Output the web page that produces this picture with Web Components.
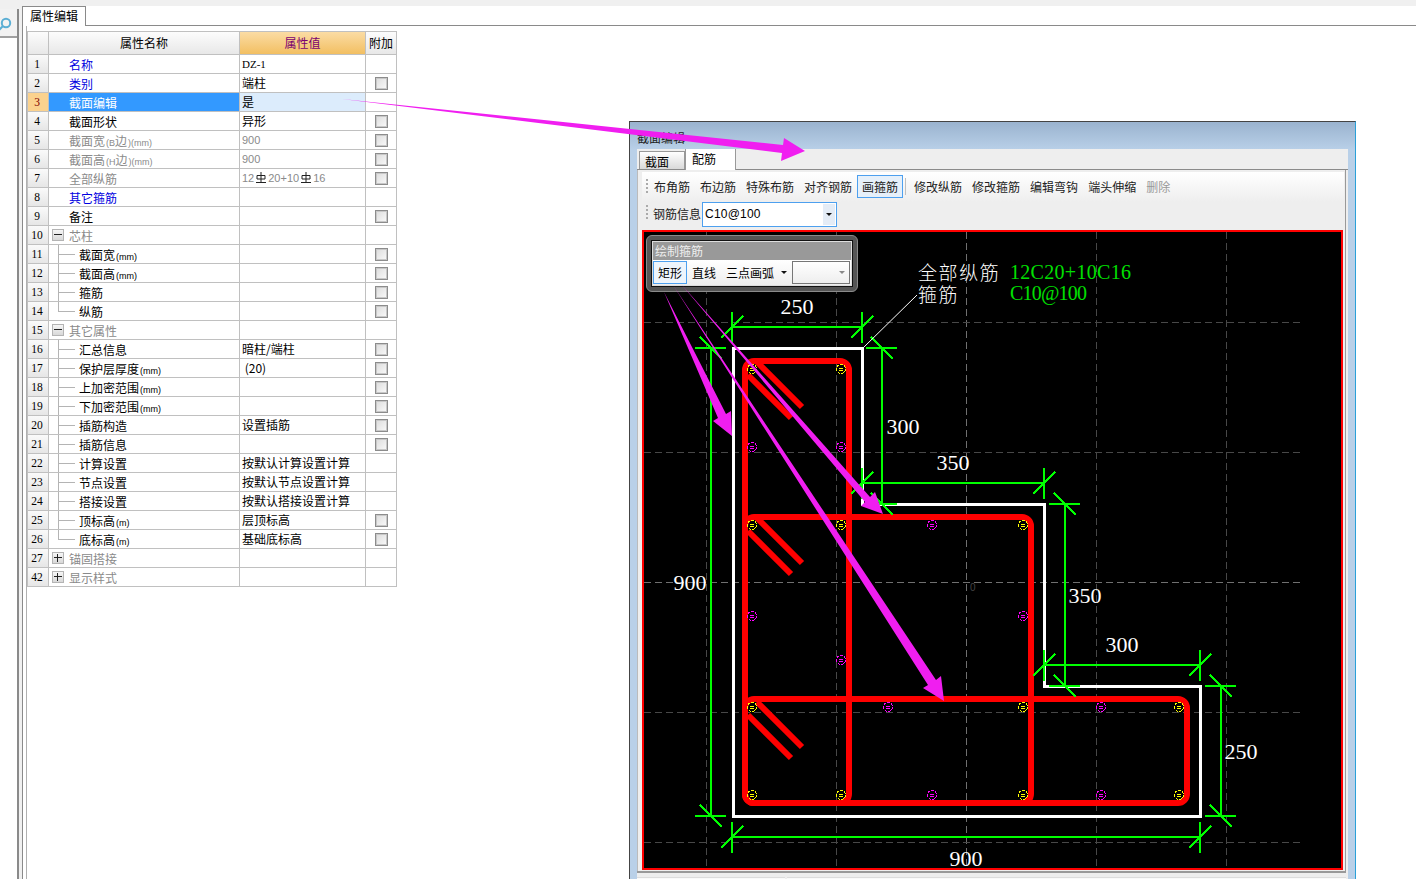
<!DOCTYPE html>
<html>
<head>
<meta charset="utf-8">
<style>
  html, body { margin: 0; height: 100%; overflow: hidden; background: #fff; }
  body { font: 12px "Noto Sans CJK SC", "Liberation Sans", sans-serif; color: #000; }
</style>
</head>
<body>
<app-shell>
  <side-strip slot="side"></side-strip>
  <prop-panel slot="main"></prop-panel>
  <section-dialog slot="over"></section-dialog>
  <arrow-layer slot="over"></arrow-layer>
</app-shell>

<script>
class AppShell extends HTMLElement {
  constructor() {
    super();
    this.attachShadow({ mode: 'open' });
    this.shadowRoot.innerHTML = `
      <style>
        :host { display: flex; flex-direction: column; width: 1416px; height: 879px; position: relative; overflow: hidden; background: #fff; }
        .top { height: 6px; flex: none; background: #f0f0f0; }
        .body { flex: 1; display: flex; min-height: 0; }
      </style>
      <div class="top"></div>
      <div class="body">
        <slot name="side"></slot>
        <slot name="main"></slot>
      </div>
      <slot name="over"></slot>
    `;
  }
}

class SideStrip extends HTMLElement {
  constructor() {
    super();
    this.attachShadow({ mode: 'open' });
    this.shadowRoot.innerHTML = `
      <style>
        :host { display: flex; width: 22px; flex: none; background: #f0f0f0; }
        .pane { width: 17px; margin-top: 3px; background: #fff; border-right: 2px solid #8a8a8a; }
        .find { height: 27px; background: #f2f2f2; border-bottom: 2px solid #a0a0a0; display: flex; align-items: center; overflow: hidden; }
        svg { display: block; margin: 2px 0 0 -2px; }
      </style>
      <div class="pane">
        <div class="find">
          <svg width="14" height="14" viewBox="0 0 14 14">
            <circle cx="8" cy="6" r="4.2" fill="none" stroke="#5aaed4" stroke-width="2"/>
            <path d="M5 9 L1 13" stroke="#5aaed4" stroke-width="2"/>
          </svg>
        </div>
      </div>
    `;
  }
}

const BAR = '<svg class="sym" width="10" height="11" viewBox="0 0 10 11"><path d="M5 0V10M1 3.5H9V7H1ZM0 10.5H10" fill="none" stroke="#222"/></svg>';

const ROWS = [
  ['1', '名称', 'DZ-1', 'blue', 0, false],
  ['2', '类别', '端柱', 'blue', 0, true],
  ['3', '截面编辑', '是', 'sel', 0, false],
  ['4', '截面形状', '异形', '', 0, true],
  ['5', '截面宽(B边)(mm)', '900', 'gray', 0, true],
  ['6', '截面高(H边)(mm)', '900', 'gray', 0, true],
  ['7', '全部纵筋', `12${BAR}20+10${BAR}16`, 'gray', 0, true],
  ['8', '其它箍筋', '', 'blue', 0, false],
  ['9', '备注', '', '', 0, true],
  ['10', '芯柱', '', 'gray', 'minus', false],
  ['11', '截面宽(mm)', '', '', 1, true],
  ['12', '截面高(mm)', '', '', 1, true],
  ['13', '箍筋', '', '', 1, true],
  ['14', '纵筋', '', '', 2, true],
  ['15', '其它属性', '', 'gray', 'minus', false],
  ['16', '汇总信息', '暗柱/端柱', '', 1, true],
  ['17', '保护层厚度(mm)', ' (20)', '', 1, true],
  ['18', '上加密范围(mm)', '', '', 1, true],
  ['19', '下加密范围(mm)', '', '', 1, true],
  ['20', '插筋构造', '设置插筋', '', 1, true],
  ['21', '插筋信息', '', '', 1, true],
  ['22', '计算设置', '按默认计算设置计算', '', 1, false],
  ['23', '节点设置', '按默认节点设置计算', '', 1, false],
  ['24', '搭接设置', '按默认搭接设置计算', '', 1, false],
  ['25', '顶标高(m)', '层顶标高', '', 1, true],
  ['26', '底标高(m)', '基础底标高', '', 2, true],
  ['27', '锚固搭接', '', 'gray', 'plus', false],
  ['42', '显示样式', '', 'gray', 'plus', false],
];

class PropRow extends HTMLElement {
  constructor() {
    super();
    this.attachShadow({ mode: 'open' });
  }

  connectedCallback() {
    const [num, name, value, kind, level, check] = ROWS[+this.getAttribute('index')];
    let tree = '';
    if (level === 'minus' || level === 'plus') {
      tree = `<span class="box">${level === 'plus' ? '<b class="v"></b>' : ''}<b class="h"></b></span>`;
    } else if (level) {
      tree = `<span class="tree ${level === 2 ? 'end' : ''}"></span>`;
    }
    const label = name.replace(/[()A-Za-z]+/g, m => `<small>${m}</small>`);
    this.shadowRoot.innerHTML = `
      <style>
        :host { display: grid; grid-template-columns: 21px 191px 126px 31px; height: 19px; box-sizing: border-box; }
        div { box-sizing: border-box; border-right: 1px solid #c0c0c0; border-bottom: 1px solid #c0c0c0; min-width: 0; white-space: pre; line-height: 18px; font-size: 12px; overflow: hidden; }
        .num { background: linear-gradient(#fafafa, #e6e6e6); text-align: center; padding-right: 2px; font: 11.5px/18px "Liberation Serif", serif; }
        .name { display: flex; align-items: center; color: #000; position: relative; }
        .name span.t { margin-left: 20px; position: relative; top: 1px; }
        .sub span.t { margin-left: 30px; }
        small { font: 9px "Liberation Sans", sans-serif; margin: 0 0 0 1px; }
        .blue .name { color: #0000e0; }
        .gray .name { color: #8a8a8a; }
        .sel .name { background: #3399ff; color: #fff; }
        .sel .val { background: #dcecfc; }
        .sel .num { background: #fbd28e; color: #800000; }
        .val { padding-left: 2px; }
        .val.mono { font: 11px/18px "Liberation Serif", serif; }
        .gray .val { color: #8a8a8a; font: 11px/18px "Liberation Sans", sans-serif; }
        .sym { vertical-align: -1px; margin: 0 2px; }
        .add { display: flex; align-items: center; justify-content: center; }
        .check { width: 11px; height: 11px; border: 1px solid #8c8c8c; background: linear-gradient(135deg, #dcdcdc, #fafafa); outline: 1px solid #c8c8c8; outline-offset: -2px; }
        .box { position: absolute; left: 3px; top: 3px; width: 12px; height: 12px; border: 1px solid #b4b4b4; box-sizing: border-box; background: linear-gradient(#f6f6f6, #d8d8d8); }
        .box b { position: absolute; background: #222; }
        .box .h { left: 1px; right: 1px; top: 4px; height: 1px; }
        .box .v { top: 1px; bottom: 1px; left: 4px; width: 1px; }
        .tree { position: absolute; left: 9px; top: -1px; bottom: -1px; width: 16px; border-left: 1px solid #b4b4b4; }
        .tree::after { content: ""; position: absolute; left: 0; right: 0; top: 10px; border-top: 1px solid #b4b4b4; }
        .tree.end { bottom: 8px; }
        .wrap { display: contents; }
      </style>
      <section class="wrap ${kind} ${level === 1 || level === 2 ? 'sub' : ''}">
        <div class="num">${num}</div>
        <div class="name">${tree}<span class="t">${label}</span></div>
        <div class="val ${value === 'DZ-1' ? 'mono' : ''}">${value}</div>
        <div class="add">${check ? '<span class="check"></span>' : ''}</div>
      </section>
    `;
  }
}

class PropPanel extends HTMLElement {
  constructor() {
    super();
    this.attachShadow({ mode: 'open' });
    const rows = ROWS.map((r, i) => `<prop-row index="${i}"></prop-row>`).join('');
    this.shadowRoot.innerHTML = `
      <style>
        :host { display: flex; flex-direction: column; flex: 1; min-width: 0; }
        .tabs { height: 20px; flex: none; display: flex; box-sizing: border-box; }
        .tab { width: 64px; box-sizing: border-box; border: 1px solid #8a8a8a; border-bottom: none; background: #fff; padding-left: 7px; line-height: 17px; font-size: 12px; }
        .rest { flex: 1; border-bottom: 1px solid #8a8a8a; }
        .page { flex: 1; display: flex; border-left: 1px solid #8a8a8a; padding-left: 3px; }
        .in { flex: 1; border-left: 1px solid #b0b0b0; padding-top: 5px; }
        .head { display: grid; grid-template-columns: 21px 191px 126px 31px; height: 24px; font-size: 12px; border-top: 1px solid #c0c0c0; border-left: 1px solid #c0c0c0; box-sizing: border-box; width: 370px; }
        .head div { box-sizing: border-box; border-right: 1px solid #c0c0c0; border-bottom: 1px solid #c0c0c0; text-align: center; line-height: 22px; background: linear-gradient(#fcfcfc, #e8e8e8); }
        .head .on { background: linear-gradient(#fbdca4, #f2bf62); color: #7a0070; }
        .rows { border-left: 1px solid #c0c0c0; width: 370px; box-sizing: border-box; }
      </style>
      <div class="tabs"><div class="tab">属性编辑</div><div class="rest"></div></div>
      <div class="page"><div class="in">
        <div class="head"><div></div><div>属性名称</div><div class="on">属性值</div><div>附加</div></div>
        <div class="rows">${rows}</div>
      </div></div>
    `;
  }
}

class SectionDialog extends HTMLElement {
  constructor() {
    super();
    this.attachShadow({ mode: 'open' });
    this.shadowRoot.innerHTML = `
      <style>
        :host { position: absolute; left: 629px; top: 121px; width: 727px; height: 758px; box-sizing: border-box; border: 1px solid #444; border-bottom: none; background: linear-gradient(#9ab3cf 0, #b9d0e8 28px, #b9d0e8 100%); display: flex; flex-direction: column; padding: 27px 7px 0 7px; border-right-color: #2aa0d8; }
        .title { position: absolute; left: 7px; top: 7px; font-size: 12px; line-height: 17px; color: #222; }
        .inner { flex: 1; background: #eee; display: flex; flex-direction: column; min-height: 0; overflow: hidden; }
        .tabs { height: 21px; flex: none; display: flex; align-items: flex-end; padding-left: 2px; border-bottom: 1px solid #8a8a8a; position: relative; box-sizing: border-box; }
        .tab { box-sizing: border-box; height: 18px; width: 46px; border: 1px solid #999; border-bottom: none; background: linear-gradient(#fff, #d9d9d9); font-size: 12px; line-height: 19px; padding-left: 5px; }
        .tab.on { height: 22px; width: 51px; background: #fff; position: relative; top: 1px; padding-left: 6px; line-height: 20px; border-color: #999; }
        .pane { flex: none; margin-right: 2px; border-left: 1px solid #bbb; border-right: 1px solid #999; padding: 2px 1px 1px 4px; display: flex; flex-direction: column; }
        .bar { height: 30px; flex: none; display: flex; align-items: flex-start; padding: 3px 0 0 4px; background: linear-gradient(#fff, #eee); box-sizing: border-box; }
        .grip { width: 2px; height: 16px; margin: 4px 1px 0 0; background: repeating-linear-gradient(#aaa 0 2px, transparent 2px 4px); }
        .btn { height: 23px; box-sizing: border-box; font-size: 12px; line-height: 21px; padding: 0 4px; border: 1px solid transparent; white-space: nowrap; color: #222; }
        .btn.on { border-color: #4da0ef; background: #e6f0fa; }
        .btn.off { color: #999; }
        .sep { width: 1px; height: 17px; background: #c0c0c0; margin: 3px 3px 0 2px; }
        .row2 { height: 25px; flex: none; display: flex; align-items: flex-start; padding-left: 4px; background: #eee; }
        .row2 .grip { margin: 3px 5px 0 0; }
        .row2 label { font-size: 12px; line-height: 24px; margin-right: 1px; color: #222; white-space: nowrap; }
        .combo { width: 135px; height: 25px; box-sizing: border-box; border: 1px solid #4da0ef; background: #fff; display: flex; font: 12px/22px "Liberation Sans", sans-serif; padding-left: 2px; }
        .combo span { flex: 1; letter-spacing: .2px; }
        .combo u { width: 12px; margin: 1px; background: #e4ecf6; display: flex; align-items: center; justify-content: center; }
        .combo u::after { content: ""; border: 3px solid transparent; border-top: 3px solid #111; border-bottom: none; }
        .canvas { margin-top: 3px; width: 701px; height: 640px; flex: none; }
        .foot { flex: 1; border-top: 2px solid #999; margin-right: 2px; padding-top: 4px; display: flex; gap: 2px; }
        .foot span { background: #fafafa; border-top: 1px solid #ddd; }
        .foot span:first-child { width: 148px; }
        .foot span:last-child { flex: 1; }
      </style>
      <div class="title">截面编辑</div>
      <div class="inner">
        <div class="tabs"><div class="tab">截面</div><div class="tab on">配筋</div></div>
        <div class="pane">
          <div class="bar">
            <span class="grip"></span>
            <span class="btn">布角筋</span><span class="btn">布边筋</span><span class="btn">特殊布筋</span><span class="btn">对齐钢筋</span><span class="btn on">画箍筋</span>
            <span class="sep"></span>
            <span class="btn">修改纵筋</span><span class="btn">修改箍筋</span><span class="btn">编辑弯钩</span><span class="btn">端头伸缩</span><span class="btn off">删除</span>
          </div>
          <div class="row2">
            <span class="grip"></span>
            <label>钢筋信息</label>
            <div class="combo"><span>C10@100</span><u></u></div>
          </div>
          <rebar-canvas class="canvas"></rebar-canvas>
        </div>
        <div class="foot"><span></span><span></span></div>
      </div>
    `;
  }
}

class DrawTools extends HTMLElement {
  constructor() {
    super();
    this.attachShadow({ mode: 'open' });
    this.shadowRoot.innerHTML = `
      <style>
        :host { position: absolute; left: 2px; top: 3px; width: 212px; height: 57px; box-sizing: border-box; border-radius: 6px; background: #555; border: 1px solid #8a8a8a; padding: 4px; display: flex; }
        .in { flex: 1; border: 1px solid #111; outline: 1px solid #ddd; outline-offset: -2px; display: flex; flex-direction: column; padding: 1px; background: #fff; }
        .t { height: 18px; flex: none; background: #999; color: #eee; font-size: 12px; line-height: 17px; padding-left: 2px; }
        .r { flex: 1; display: flex; align-items: center; background: linear-gradient(#fff, #eee); }
        .b { height: 23px; box-sizing: border-box; font-size: 12px; line-height: 21px; padding: 0 4px; border: 1px solid transparent; white-space: nowrap; }
        .b.on { border-color: #4da0ef; background: #eef5fc; }
        .caret { border: 3px solid transparent; border-top: 3px solid #111; border-bottom: none; margin: 0 5px 0 2px; }
        .c { width: 58px; height: 23px; box-sizing: border-box; border: 1px solid #777; background: linear-gradient(#fff, #eee); display: flex; align-items: center; justify-content: flex-end; padding-right: 4px; }
        .c::after { content: ""; border: 3px solid transparent; border-top: 3px solid #888; border-bottom: none; }
      </style>
      <div class="in">
        <div class="t">绘制箍筋</div>
        <div class="r">
          <span class="b on">矩形</span><span class="b">直线</span><span class="b">三点画弧</span><span class="caret"></span><span class="c"></span>
        </div>
      </div>
    `;
  }
}

// drawing below is in page coordinates, the viewBox shifts it into the canvas
function dim(parts) {
  return parts.map(p => `<path d="${p}"/>`).join('');
}

function tickV(x, y) { // vertical stroke with diagonal, on horizontal dimension
  return `M${x} ${y - 15}V${y + 16}M${x - 11} ${y + 11}L${x + 11} ${y - 11}`;
}
function tickH(x, y) { // horizontal stroke with diagonal, on vertical dimension
  return `M${x - 16} ${y}H${x + 15}M${x - 11} ${y - 11}L${x + 11} ${y + 11}`;
}

function stirrup(x1, y1, x2, y2) {
  return `<rect x="${x1}" y="${y1}" width="${x2 - x1}" height="${y2 - y1}" rx="9"/>`;
}
function hooks(dy) {
  return `<path d="M757 ${362 + dy}L802 ${407 + dy}M748 ${375 + dy}L791 ${418 + dy}"/>`;
}
function bars(list, color) {
  return list.map(([x, y]) => `<g stroke="${color}"><circle cx="${x}" cy="${y}" r="4.5" stroke-dasharray="3 1"/><path d="M${x - 2} ${y - 1}h4M${x - 2} ${y + 1}h4"/></g>`).join('');
}

class RebarCanvas extends HTMLElement {
  constructor() {
    super();
    this.attachShadow({ mode: 'open' });
    const gridX = [706.5, 836.5, 966.5, 1096.5, 1226.5];
    const gridY = [322.5, 452.5, 582.5, 712.5, 842.5];
    const grid = gridX.map(x => `<path d="M${x} 232V868" stroke="${x === 966.5 ? '#707070' : '#484848'}"/>`).join('') +
      gridY.map(y => `<path d="M644 ${y}H1300" stroke="${y === 582.5 ? '#707070' : '#484848'}"/>`).join('');
    const yellow = [[752, 369], [841, 369], [752, 525], [841, 525], [1023, 525], [752, 707], [1023, 707], [1179, 707], [752, 795], [841, 795], [1023, 795], [1179, 795]];
    const magenta = [[752, 447], [841, 447], [932, 525], [752, 616], [1023, 616], [841, 660], [888, 707], [1101, 707], [932, 795], [1101, 795]];
    const dims = [
      'M732 327H862', tickV(732, 327), tickV(862, 327),
      'M711 348V816', tickH(711, 348), tickH(711, 816),
      'M732 837H1200', tickV(732, 837), tickV(1200, 837),
      'M882 348V504', tickH(882, 348), tickH(882, 504),
      'M862 483H1044', tickV(862, 483), tickV(1044, 483),
      'M1065 504V686', tickH(1065, 504), tickH(1065, 686),
      'M1044 665H1200', tickV(1044, 665), tickV(1200, 665),
      'M1221 686V816', tickH(1221, 686), tickH(1221, 816),
    ];
    const labels = [['250', 797, 314], ['300', 903, 434], ['350', 953, 470], ['350', 1085, 603], ['300', 1122, 652], ['250', 1241, 759], ['900', 690, 590], ['900', 966, 866]];
    this.shadowRoot.innerHTML = `
      <style>
        :host { display: block; position: relative; box-sizing: border-box; border: 2px solid #f00; background: #000; overflow: hidden; }
        svg { position: absolute; left: -2px; top: -2px; display: block; }
        text.n { font: 22px "Liberation Serif", serif; fill: #fff; text-anchor: middle; }
        text.c { font: 300 19px "Liberation Sans", "Noto Sans CJK SC", sans-serif; letter-spacing: 1.6px; fill: #fff; }
        text.g { font: 20px "Liberation Serif", serif; fill: #00e000; }
      </style>
      <svg width="701" height="640" viewBox="642 230 701 640" fill="none">
        <g stroke-dasharray="7 4" stroke-width="1">${grid}</g>
        <text x="970" y="591" style="font:10px 'Liberation Sans',sans-serif;fill:#444">0</text>
        <path d="M733 348.5H862V504H1044V686.5H1200.5V816H733Z" stroke="#fff" stroke-width="3" shape-rendering="crispEdges"/>
        <g stroke="#f00" stroke-width="6">
          ${stirrup(745, 361, 849, 803)}
          ${stirrup(745, 517, 1031, 803)}
          ${stirrup(745, 699, 1187, 803)}
          ${hooks(0)}${hooks(156)}${hooks(340)}
        </g>
        <g stroke-width="1" shape-rendering="crispEdges">${bars(yellow, '#ff0')}${bars(magenta, '#f0f')}</g>
        <g stroke="#0f0" stroke-width="2" shape-rendering="crispEdges">${dim(dims)}</g>
        <path d="M864 347L917 295" stroke="#fff" stroke-width="1"/>
        ${labels.map(([t, x, y]) => `<text class="n" x="${x}" y="${y}">${t}</text>`).join('')}
        <text class="c" x="918" y="280">全部纵筋</text>
        <text class="c" x="918" y="302">箍筋</text>
        <text class="g" x="1010" y="279" textLength="121" lengthAdjust="spacing">12C20+10C16</text>
        <text class="g" x="1010" y="300" textLength="77" lengthAdjust="spacing">C10@100</text>
      </svg>
      <draw-tools></draw-tools>
    `;
  }
}

class ArrowLayer extends HTMLElement {
  constructor() {
    super();
    this.attachShadow({ mode: 'open' });
    this.shadowRoot.innerHTML = `
      <style>
        :host { position: absolute; left: 0; top: 0; width: 1416px; height: 879px; pointer-events: none; }
        svg { display: block; }
      </style>
      <svg width="1416" height="879" fill="#f01ef0">
        <polygon points="342,99 783,145 784,138 805,151 781,161 782,153"/>
        <polygon points="664,292 726,414 731,411 732,436 713,421 718,418"/>
        <polygon points="673,285 936,680 941,676 944,701 923,688 928,685"/>
        <polygon points="681,284 870,497 875,492 883,514 861,506 865,502"/>
      </svg>
    `;
  }
}

customElements.define('app-shell', AppShell);
customElements.define('side-strip', SideStrip);
customElements.define('prop-row', PropRow);
customElements.define('prop-panel', PropPanel);
customElements.define('draw-tools', DrawTools);
customElements.define('rebar-canvas', RebarCanvas);
customElements.define('section-dialog', SectionDialog);
customElements.define('arrow-layer', ArrowLayer);
</script>
</body>
</html>
